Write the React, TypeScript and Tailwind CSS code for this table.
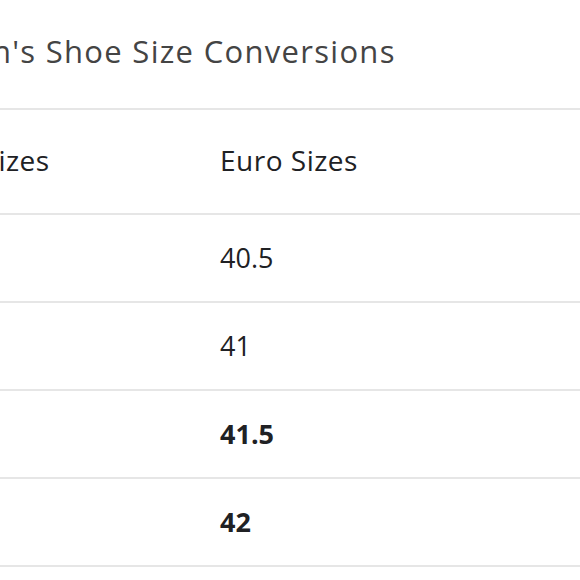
import React from "react";

const rows = [
  { us: "7.5", eu: "40.5", bold: false },
  { us: "8", eu: "41", bold: false },
  { us: "8.5", eu: "41.5", bold: true },
  { us: "9", eu: "42", bold: true },
];

export default function App() {
  return (
    <div
      className="w-[580px] h-[580px] overflow-hidden bg-white"
      style={{ fontFamily: "'Open Sans', Roboto, sans-serif" }}
    >
      <div className="h-[108px] flex items-center overflow-hidden">
        <div className="ml-[-56px] whitespace-nowrap text-[31px] tracking-[1.3px] text-[#444444] leading-none pb-[6px]">
          Men's Shoe Size Conversions
        </div>
      </div>
      <div className="border-t-2 border-[#e6e6e6]">
        <div className="h-[105px] flex items-center border-b-2 border-[#e6e6e6] text-[28px] tracking-[0.5px] text-[#202124] pb-[3px]">
          <div className="w-[220px] shrink-0 overflow-hidden whitespace-nowrap">
            <span className="inline-block ml-[-62px]">US Sizes</span>
          </div>
          <div className="whitespace-nowrap">Euro Sizes</div>
        </div>
        {rows.map((r) => (
          <div
            key={r.eu}
            className={`h-[88px] flex items-center border-b-2 border-[#e6e6e6] text-[27px] text-[#202124] ${
              r.bold ? "font-bold" : "font-normal"
            }`}
          >
            <div className="w-[220px] shrink-0" />
            <div className="whitespace-nowrap">{r.eu}</div>
          </div>
        ))}
      </div>
    </div>
  );
}
